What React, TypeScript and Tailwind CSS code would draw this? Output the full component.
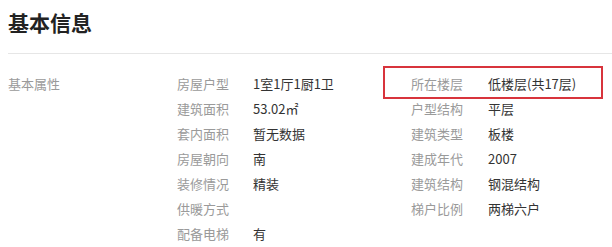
const left: [string, string][] = [
  ['房屋户型', '1室1厅1厨1卫'],
  ['建筑面积', '53.02㎡'],
  ['套内面积', '暂无数据'],
  ['房屋朝向', '南'],
  ['装修情况', '精装'],
  ['供暖方式', ''],
  ['配备电梯', '有'],
];

const right: [string, string][] = [
  ['所在楼层', '低楼层(共17层)'],
  ['户型结构', '平层'],
  ['建筑类型', '板楼'],
  ['建成年代', '2007'],
  ['建筑结构', '钢混结构'],
  ['梯户比例', '两梯六户'],
];

function Pairs({ items, labelW }: { items: [string, string][]; labelW: string }) {
  return (
    <div className="flex flex-col">
      {items.map(([k, v]) => (
        <div key={k} className="flex h-[25px] items-center">
          <span className={`${labelW} text-[#9a9a9a]`}>{k}</span>
          <span className="text-[#333]">{v}</span>
        </div>
      ))}
    </div>
  );
}

export default function App() {
  return (
    <div
      className="w-[612px] h-[247px] bg-white pt-2 pl-2 overflow-hidden"
      style={{ fontFamily: '"Noto Sans CJK SC", "Noto Sans", sans-serif' }}
    >
      <h2 className="h-7 leading-7 text-[21px] font-bold text-[#222]">基本信息</h2>
      <div className="mt-[17px] border-t border-[#e6e6e6] pt-[17px] text-[13px]">
        <div className="relative flex">
          <div className="w-[169px] h-[25px] flex items-center text-[#9a9a9a]">基本属性</div>
          <div className="w-[234px]">
            <Pairs items={left} labelW="w-[76px]" />
          </div>
          <Pairs items={right} labelW="w-[77px]" />
          <div className="absolute left-[375px] top-[-5px] w-[220px] h-[33px] border-[2.5px] border-[#d8343c]" />
        </div>
      </div>
    </div>
  );
}
